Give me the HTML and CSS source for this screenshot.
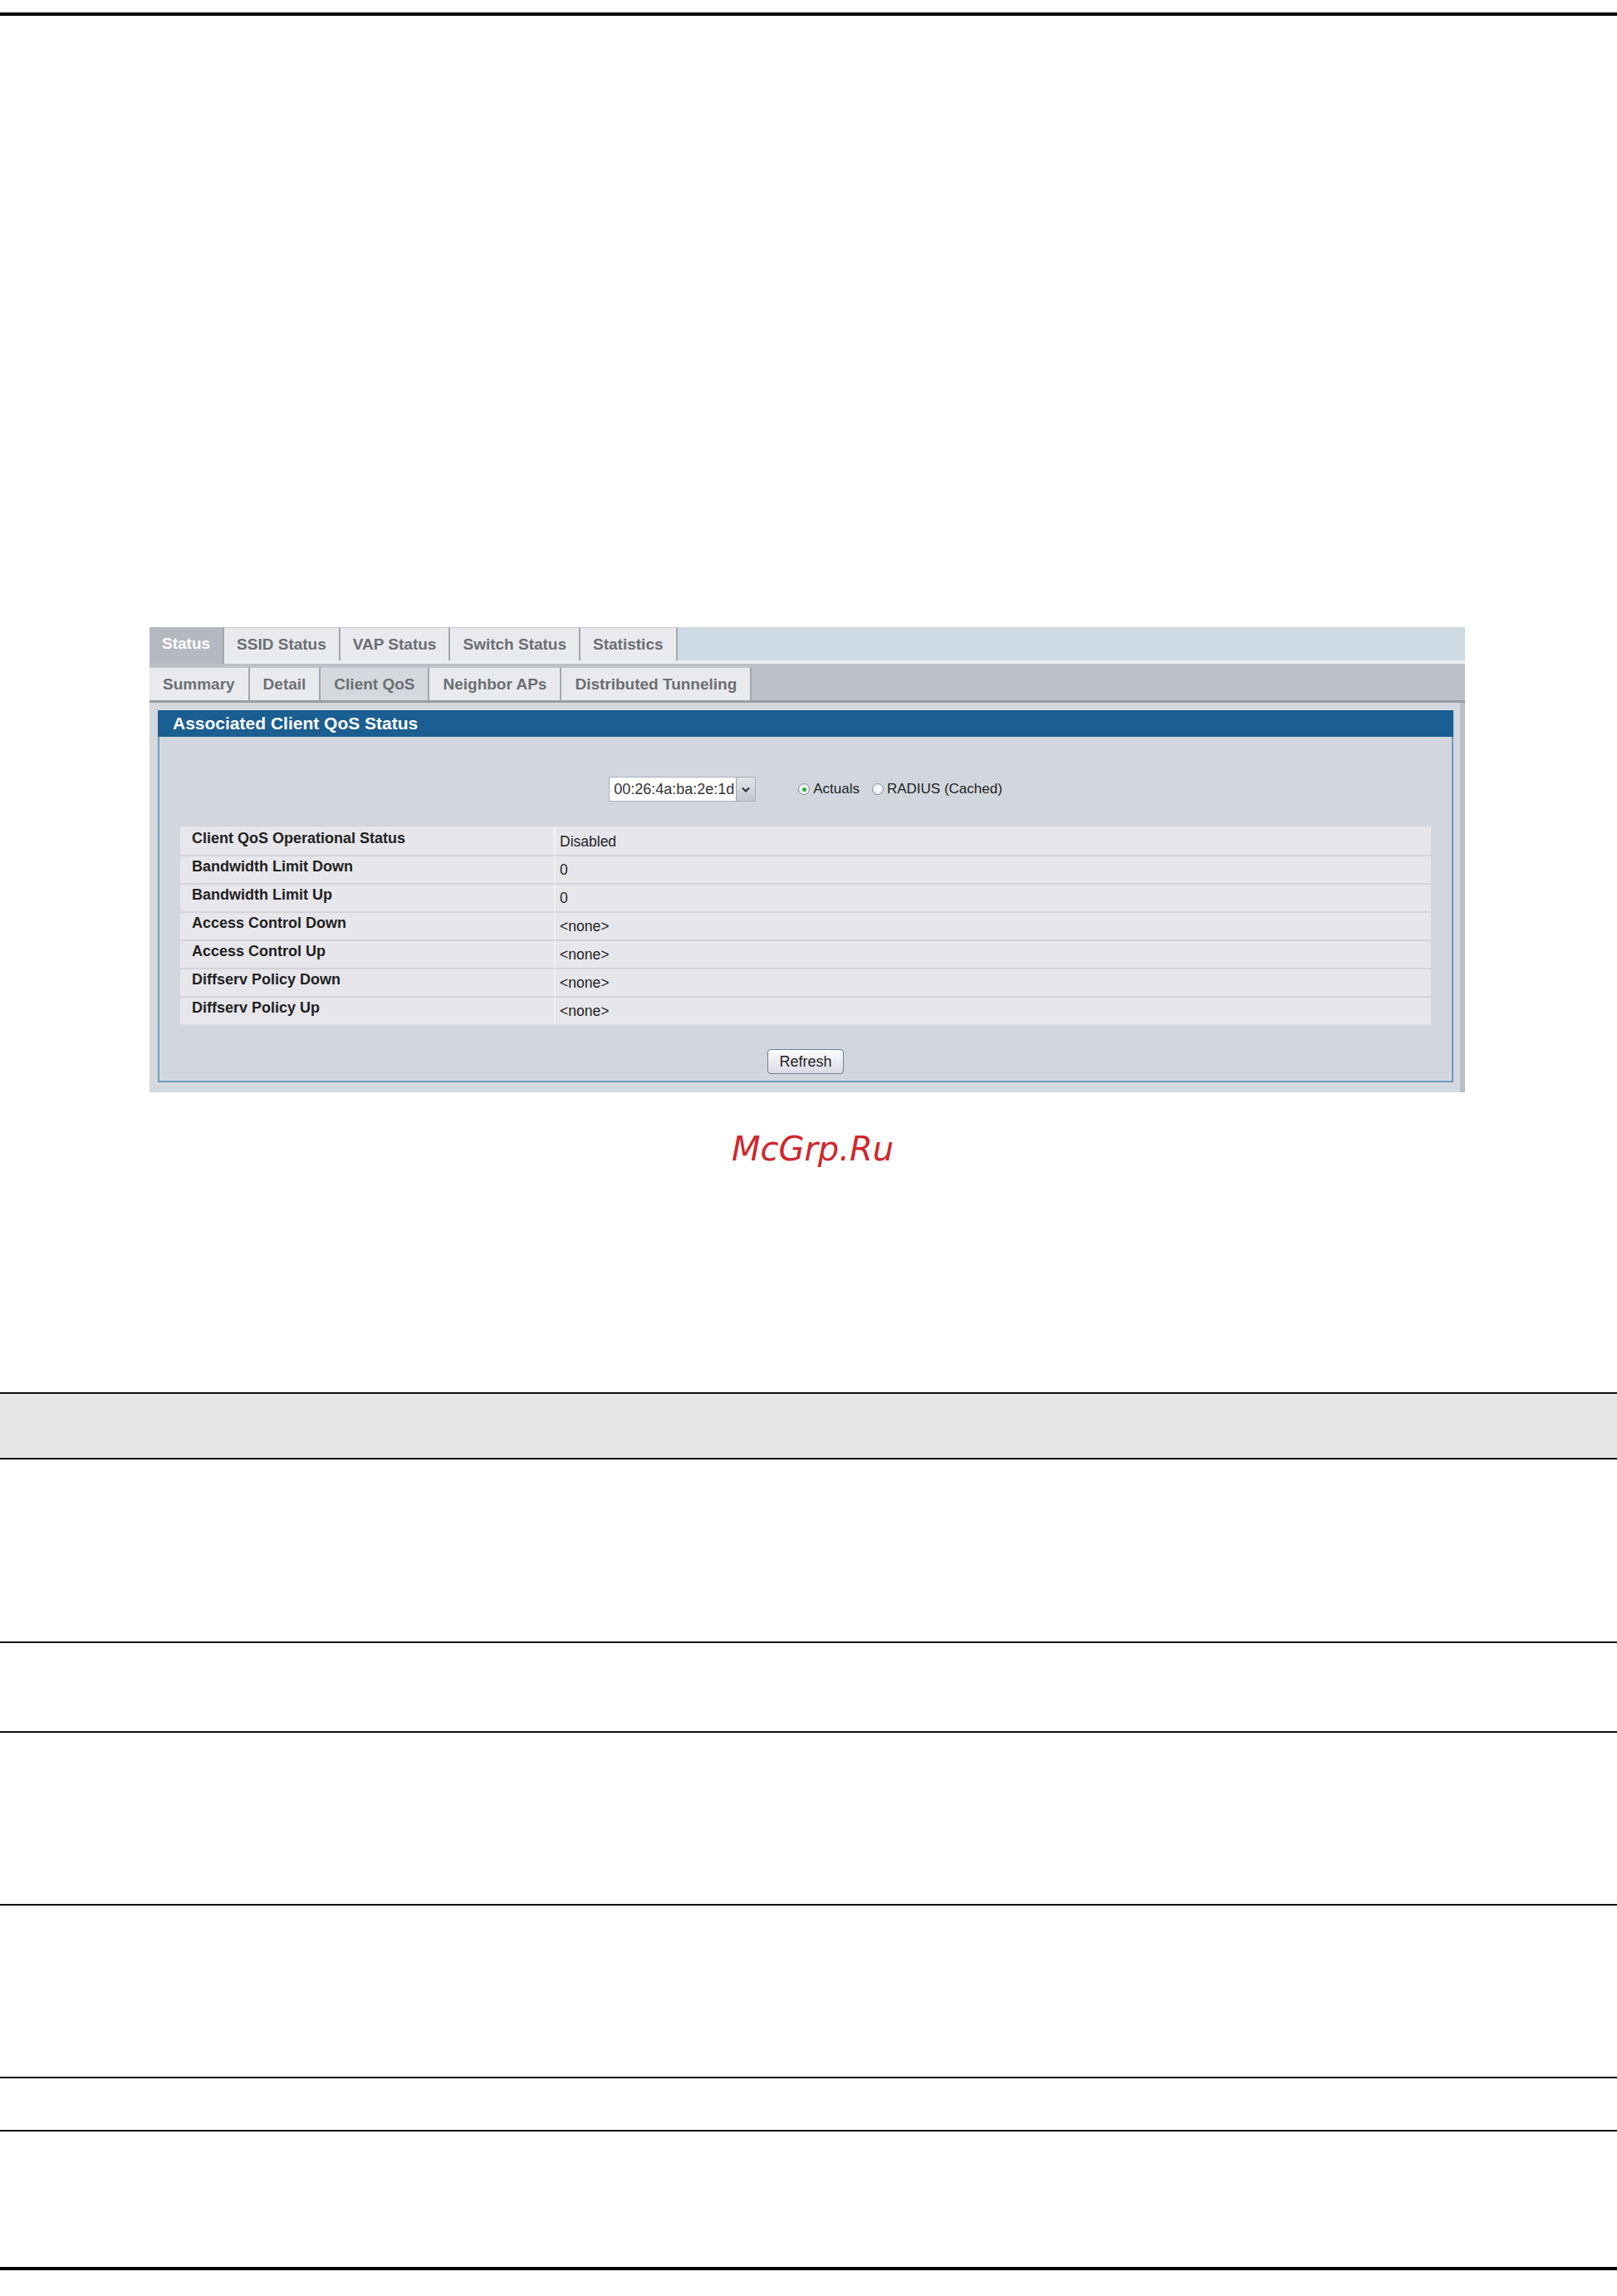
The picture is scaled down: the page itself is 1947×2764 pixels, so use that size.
FILE: index.html
```html
<!DOCTYPE html>
<html lang="en">
<head>
  <meta charset="UTF-8">
  <title>Associated Client QoS Status</title>
  <meta name="viewport" content="width=device-width, initial-scale=1.0">
  <link rel="stylesheet" href="styles.css">
</head>
<body>
  <div class="rule-top"></div>

  <div class="shot">
    <div class="tabs tabs-main">
      <span class="tab active">Status</span>
      <span class="tab">SSID Status</span>
      <span class="tab">VAP Status</span>
      <span class="tab">Switch Status</span>
      <span class="tab">Statistics</span>
    </div>
    <div class="tabs tabs-sub">
      <span class="tab">Summary</span>
      <span class="tab">Detail</span>
      <span class="tab active">Client QoS</span>
      <span class="tab">Neighbor APs</span>
      <span class="tab">Distributed Tunneling</span>
    </div>
    <div class="shot-body">
      <div class="panel">
        <div class="panel-head">Associated Client QoS Status</div>
        <div class="panel-content">
          <div class="picker">
            <div class="select">
              <span class="select-value">00:26:4a:ba:2e:1d</span>
              <span class="select-arrow">
                <svg width="10" height="7" viewBox="0 0 10 7"><path d="M1 1.5 L5 5.5 L9 1.5" fill="none" stroke="#2a2d33" stroke-width="2"/></svg>
              </span>
            </div>
            <label class="radio first"><span class="dot on"></span>Actuals</label>
            <label class="radio"><span class="dot"></span>RADIUS (Cached)</label>
          </div>
          <table class="status">
            <tr><td class="label">Client QoS Operational Status</td><td class="value">Disabled</td></tr>
            <tr><td class="label">Bandwidth Limit Down</td><td class="value">0</td></tr>
            <tr><td class="label">Bandwidth Limit Up</td><td class="value">0</td></tr>
            <tr><td class="label">Access Control Down</td><td class="value">&lt;none&gt;</td></tr>
            <tr><td class="label">Access Control Up</td><td class="value">&lt;none&gt;</td></tr>
            <tr><td class="label">Diffserv Policy Down</td><td class="value">&lt;none&gt;</td></tr>
            <tr><td class="label">Diffserv Policy Up</td><td class="value">&lt;none&gt;</td></tr>
          </table>
          <div class="actions">
            <button class="btn-refresh">Refresh</button>
          </div>
        </div>
      </div>
    </div>
  </div>

  <div class="watermark">McGrp.Ru</div>

  <div class="doc-table">
    <div class="doc-head"></div>
    <div class="doc-row r1"></div>
    <div class="doc-row r2"></div>
    <div class="doc-row r3"></div>
    <div class="doc-row r4"></div>
    <div class="doc-row r5"></div>
    <div class="doc-row r6"></div>
  </div>
</body>
</html>
```

FILE: styles.css
```css
body {
  margin: 0;
  background: #fff;
  font-family: "Liberation Sans", Arial, sans-serif;
  color: #222;
}
.rule-top {
  margin-top: 15px;
  border-top: 4px solid #000;
}

/* screenshot of the web ui */
.shot {
  margin: 736px 0 0 180px;
  width: 1584px;
  height: 560px;
  display: flex;
  flex-direction: column;
  background: #d4d8df;
}
.tabs {
  display: flex;
  flex-shrink: 0;
}
.tabs-main {
  height: 40px;
  background: #cddae3;
  border-bottom: 4px solid #eaeef2;
}
.tabs-sub {
  height: 44px;
  align-items: flex-end;
  background: #bcc0c7;
  border-bottom: 3px solid #999da4;
}
.tab {
  display: flex;
  align-items: center;
  box-sizing: border-box;
  height: 40px;
  padding: 0 15px;
  font-size: 19px;
  font-weight: bold;
  color: #6c6e73;
  background: #e8eaee;
  border-top: 1px solid #c4c7cc;
  border-right: 2px solid #a4a8ae;
}
.tabs-main .tab.active {
  height: 44px;
  margin-bottom: -4px;
  padding-bottom: 4px;
  background: #b4b8bf;
  color: #fff;
  border-top: none;
}
.tabs-sub .tab {
  padding: 0 16px;
}
.tabs-sub .tab.active {
  background: #d5d8dd;
}
.shot-body {
  flex: 1;
  display: flex;
  padding: 9px 8px 12px 10px;
  border-right: 6px solid #b9bec5;
}
.panel {
  flex: 1;
  display: flex;
  flex-direction: column;
}
.panel-head {
  height: 32px;
  display: flex;
  align-items: center;
  padding-left: 18px;
  background: #1b5e91;
  color: #fff;
  font-size: 21px;
  font-weight: bold;
}
.panel-content {
  flex: 1;
  padding: 48px 25px 8px;
  background: #d2d7df;
  border: 2px solid #6f98b9;
  border-top: none;
}
.picker {
  height: 30px;
  display: flex;
  justify-content: center;
  align-items: center;
}
.select {
  display: flex;
  width: 177px;
  height: 30px;
  box-sizing: border-box;
  border: 1px solid #a7b0bd;
  background: #fff;
}
.select-value {
  align-self: center;
  padding-left: 5px;
  font-size: 18px;
  color: #333;
}
.select-arrow {
  margin-left: auto;
  width: 22px;
  display: flex;
  align-items: center;
  justify-content: center;
  background: linear-gradient(#e2e4ea, #c4c8d2);
  border-left: 1px solid #9aa3b0;
}
.radio {
  display: flex;
  align-items: center;
  margin-left: 15px;
  font-size: 17px;
  color: #222;
}
.radio.first {
  margin-left: 51px;
}
.dot {
  width: 14px;
  height: 14px;
  box-sizing: border-box;
  margin-right: 4px;
  display: flex;
  align-items: center;
  justify-content: center;
  border: 1px solid #8d939c;
  border-radius: 50%;
  background: radial-gradient(#fff, #dfe2e7);
}
.dot.on::after {
  content: "";
  width: 5px;
  height: 5px;
  border-radius: 50%;
  background: #2fae3a;
}
table.status {
  width: 100%;
  margin-top: 30px;
  border-collapse: separate;
  border-spacing: 0;
  background: #e7e6eb;
}
.status td {
  height: 34px;
  box-sizing: border-box;
  vertical-align: top;
  padding-bottom: 0;
}
.status tr + tr td {
  border-top: 2px solid #d4d3d9;
}
.status td.label {
  width: 452px;
  padding: 4px 0 0 14px;
  border-right: 2px solid #f1f1f3;
  font-size: 18px;
  font-weight: bold;
  color: #1f1f1f;
}
.status td.value {
  padding: 8px 0 0 5px;
  font-size: 17.5px;
  color: #222;
}
.status tr + tr td.label {
  padding-top: 2px;
}
.status tr + tr td.value {
  padding-top: 6px;
}
.actions {
  display: flex;
  justify-content: center;
  margin-top: 30px;
}
.btn-refresh {
  width: 92px;
  height: 30px;
  padding: 0;
  font-family: "Liberation Sans", Arial, sans-serif;
  font-size: 18px;
  color: #222;
  background: linear-gradient(#fdfdff, #d9dae6);
  border: 1px solid #6d7f93;
  border-radius: 4px;
}

.watermark {
  margin-top: 44px;
  padding-left: 10px;
  text-align: center;
  font-family: "DejaVu Sans", sans-serif;
  font-style: oblique;
  font-size: 40px;
  line-height: 48px;
  color: #d0262d;
}

/* document table below the figure */
.doc-table {
  margin-top: 269px;
}
.doc-head {
  height: 77px;
  background: #e5e5e5;
  border-top: 2px solid #111;
  border-bottom: 2px solid #111;
}
.doc-row {
  border-bottom: 2px solid #111;
}
.r1 { height: 219px; }
.r2 { height: 106px; }
.r3 { height: 206px; }
.r4 { height: 206px; }
.r5 { height: 62px; }
.r6 {
  height: 163px;
  border-bottom: 4px solid #000;
}
```
